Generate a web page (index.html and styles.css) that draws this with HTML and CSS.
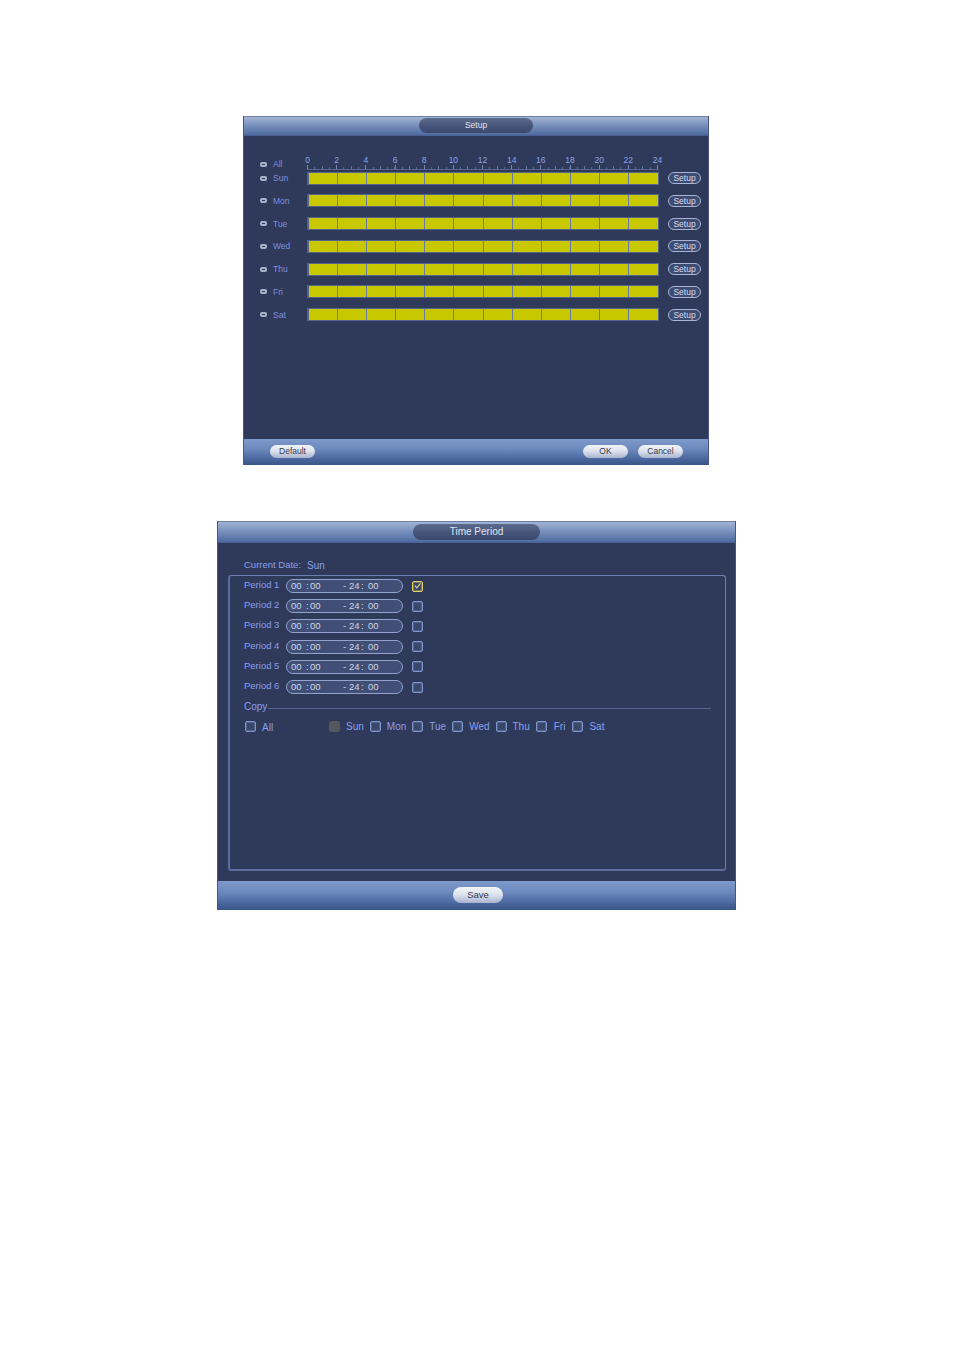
FILE: index.html
```html
<!DOCTYPE html>
<html lang="en">
<head>
    <meta charset="UTF-8">
    <title>Setup and Time Period</title>
    <link rel="stylesheet" href="styles.css">
</head>
<body>
    <div class="dialog setup-dialog">
        <div class="titlebar"><div class="title-pill">Setup</div></div>
        <div class="setup-body">
            <div class="ruler-row">
                <span class="radio"></span><span class="day-name">All</span>
                <div class="ruler">
                    <div class="hours">
                        <span>0</span><span>2</span><span>4</span><span>6</span><span>8</span><span>10</span><span>12</span><span>14</span><span>16</span><span>18</span><span>20</span><span>22</span><span>24</span>
                    </div>
                    <div class="ticks"></div>
                </div>
            </div>
            <div class="day-row"><span class="radio"></span><span class="day-name">Sun</span><div class="bar"></div><button class="mini-btn">Setup</button></div>
            <div class="day-row"><span class="radio"></span><span class="day-name">Mon</span><div class="bar"></div><button class="mini-btn">Setup</button></div>
            <div class="day-row"><span class="radio"></span><span class="day-name">Tue</span><div class="bar"></div><button class="mini-btn">Setup</button></div>
            <div class="day-row"><span class="radio"></span><span class="day-name">Wed</span><div class="bar"></div><button class="mini-btn">Setup</button></div>
            <div class="day-row"><span class="radio"></span><span class="day-name">Thu</span><div class="bar"></div><button class="mini-btn">Setup</button></div>
            <div class="day-row"><span class="radio"></span><span class="day-name">Fri</span><div class="bar"></div><button class="mini-btn">Setup</button></div>
            <div class="day-row"><span class="radio"></span><span class="day-name">Sat</span><div class="bar"></div><button class="mini-btn">Setup</button></div>
        </div>
        <div class="footer setup-footer">
            <button class="btn">Default</button>
            <div class="footer-right">
                <button class="btn">OK</button>
                <button class="btn">Cancel</button>
            </div>
        </div>
    </div>

    <div class="dialog period-dialog">
        <div class="titlebar"><div class="title-pill">Time Period</div></div>
        <div class="period-body">
            <div class="current-date"><span>Current Date:</span><span class="date-value">Sun</span></div>
            <div class="group-box">
                <div class="period-row">
                    <span class="period-name">Period 1</span>
                    <div class="time-field"><span class="t-a">00</span><span class="t-b">:</span><span class="t-c">00</span><span class="t-d">-</span><span class="t-e">24</span><span class="t-f">:</span><span class="t-g">00</span></div>
                    <span class="check checked">
                        <svg viewBox="0 0 12 12" width="10" height="10"><path d="M2.5 5.5 L5 8.5 L10 2.5" fill="none" stroke="#e8dc8c" stroke-width="1.4"/></svg>
                    </span>
                </div>
                <div class="period-row">
                    <span class="period-name">Period 2</span>
                    <div class="time-field"><span class="t-a">00</span><span class="t-b">:</span><span class="t-c">00</span><span class="t-d">-</span><span class="t-e">24</span><span class="t-f">:</span><span class="t-g">00</span></div>
                    <span class="check"></span>
                </div>
                <div class="period-row">
                    <span class="period-name">Period 3</span>
                    <div class="time-field"><span class="t-a">00</span><span class="t-b">:</span><span class="t-c">00</span><span class="t-d">-</span><span class="t-e">24</span><span class="t-f">:</span><span class="t-g">00</span></div>
                    <span class="check"></span>
                </div>
                <div class="period-row">
                    <span class="period-name">Period 4</span>
                    <div class="time-field"><span class="t-a">00</span><span class="t-b">:</span><span class="t-c">00</span><span class="t-d">-</span><span class="t-e">24</span><span class="t-f">:</span><span class="t-g">00</span></div>
                    <span class="check"></span>
                </div>
                <div class="period-row">
                    <span class="period-name">Period 5</span>
                    <div class="time-field"><span class="t-a">00</span><span class="t-b">:</span><span class="t-c">00</span><span class="t-d">-</span><span class="t-e">24</span><span class="t-f">:</span><span class="t-g">00</span></div>
                    <span class="check"></span>
                </div>
                <div class="period-row">
                    <span class="period-name">Period 6</span>
                    <div class="time-field"><span class="t-a">00</span><span class="t-b">:</span><span class="t-c">00</span><span class="t-d">-</span><span class="t-e">24</span><span class="t-f">:</span><span class="t-g">00</span></div>
                    <span class="check"></span>
                </div>
                <div class="copy-head"><span>Copy</span><div class="copy-line"></div></div>
                <div class="copy-row">
                    <span class="check"></span><span class="copy-all">All</span>
                    <span class="check disabled"></span><span class="copy-day">Sun</span>
                    <span class="check"></span><span class="copy-day">Mon</span>
                    <span class="check"></span><span class="copy-day">Tue</span>
                    <span class="check"></span><span class="copy-day">Wed</span>
                    <span class="check"></span><span class="copy-day">Thu</span>
                    <span class="check"></span><span class="copy-day day-fri">Fri</span>
                    <span class="check"></span><span class="copy-day">Sat</span>
                </div>
            </div>
        </div>
        <div class="footer period-footer">
            <button class="btn save-btn">Save</button>
        </div>
    </div>
</body>
</html>
```
FILE: styles.css
```css
* {
    margin: 0;
    padding: 0;
    box-sizing: border-box;
}

body {
    background: white;
    font-family: 'Liberation Sans', Arial, sans-serif;
    height: 1350px;
    overflow: hidden;
    padding-top: 116px;
}

.dialog {
    background: #2f3a5b;
    display: flex;
    flex-direction: column;
    border-left: 1px solid #46557f;
    border-right: 1px solid #46557f;
}

.setup-dialog {
    width: 466px;
    height: 349px;
    margin-left: 243px;
}

.period-dialog {
    width: 519px;
    height: 389px;
    margin-left: 217px;
    margin-top: 56px;
}

.titlebar {
    height: 20px;
    background: linear-gradient(180deg, #a3b4d2 0%, #7f95c0 40%, #4d6a9f 100%);
    border-top: 1px solid #6d7ea8;
    border-bottom: 1px solid #4a6096;
    display: flex;
    justify-content: center;
    flex-shrink: 0;
}

.title-pill {
    width: 114px;
    height: 15px;
    margin-top: 1px;
    border-radius: 8px;
    background: linear-gradient(180deg, #5c6c8e 0%, #47567b 50%, #3a486c 100%);
    color: #e0e4f0;
    font-size: 8.5px;
    line-height: 15px;
    text-align: center;
}

.footer {
    margin-top: auto;
    background: linear-gradient(180deg, #7e9acb 0%, #6b88bd 40%, #47659b 80%, #3a5485 100%);
    display: flex;
    align-items: center;
    flex-shrink: 0;
}

.btn {
    background: linear-gradient(180deg, #f2f4f8 0%, #dfe3ee 45%, #a9b4cf 100%);
    border: none;
    border-radius: 7px;
    color: #333a4c;
    font-family: inherit;
    font-size: 8.5px;
    width: 45px;
    height: 13px;
    line-height: 13px;
}

/* setup dialog */

.setup-body {
    flex: 1;
    padding: 20px 0 0 16px;
}

.ruler-row {
    display: flex;
    align-items: flex-start;
    height: 15px;
}

.ruler-row .radio {
    margin-top: 6px;
}

.ruler-row .day-name {
    margin-top: 3px;
}

.radio {
    width: 7px;
    height: 5px;
    border: 2px solid #aab2ca;
    border-radius: 2px;
    flex-shrink: 0;
}

.day-name {
    width: 34px;
    margin-left: 6px;
    color: #7a90e0;
    font-size: 8.5px;
    line-height: 10px;
}

.ruler {
    width: 351.5px;
}

.hours {
    display: grid;
    grid-template-columns: repeat(13, 29.17px);
    margin-left: -14px;
    height: 8px;
    color: #8ea2ea;
    font-size: 8.5px;
    line-height: 8px;
    text-align: center;
}

/* tall tick every 2h, medium every 1h, short every 30min */
.ticks {
    height: 5px;
    margin-top: 1px;
    border-bottom: 1px solid #56668f;
    background-image:
        repeating-linear-gradient(90deg, #7686b2 0, #7686b2 1px, transparent 1px, transparent 29.17px),
        repeating-linear-gradient(90deg, #64749f 0, #64749f 1px, transparent 1px, transparent 14.585px),
        repeating-linear-gradient(90deg, #56668f 0, #56668f 1px, transparent 1px, transparent 7.29px);
    background-size: 100% 4px, 100% 3px, 100% 2px;
    background-position: 0 0, 0 100%, 0 100%;
    background-repeat: no-repeat;
}

.day-row {
    display: flex;
    align-items: center;
    height: 22.75px;
}

.day-row:nth-child(2) {
    height: 14px;
    margin-bottom: 4.6px;
}

.bar {
    width: 351.5px;
    height: 13px;
    border: 1px solid #55648c;
    border-left-width: 2px;
    background-color: #c8c800;
    background-image: repeating-linear-gradient(90deg, transparent 0, transparent 28.17px, #6a7a9c 28.17px, #6a7a9c 29.17px);
    background-origin: border-box;
    background-position: 1.5px 0;
}

.mini-btn {
    width: 33px;
    height: 12px;
    margin-left: 9.5px;
    background: #3f4c72;
    border: 1px solid #a7b4d6;
    border-radius: 6px;
    color: #d4daf0;
    font-family: inherit;
    font-size: 8.5px;
    line-height: 10px;
}

.setup-footer {
    height: 26px;
    padding: 0 25px 1px 26px;
    justify-content: space-between;
}

.footer-right {
    display: flex;
    gap: 10px;
}

/* time period dialog */

.period-dialog .titlebar {
    height: 22px;
}

.period-dialog .title-pill {
    width: 127px;
    height: 16px;
    margin-top: 2px;
    font-size: 10px;
    line-height: 16px;
}

.period-body {
    flex: 1;
    padding: 15px 10px 0 10px;
}

.current-date {
    display: flex;
    height: 16px;
    padding-left: 16px;
    color: #8a9eea;
    font-size: 9.5px;
    line-height: 13px;
}

.date-value {
    margin-left: 6px;
    margin-top: 1px;
    font-size: 10px;
}

.group-box {
    width: 498px;
    height: 296px;
    margin-top: 1px;
    padding: 0 14px 0 14px;
    border: 1px solid #6d7eb0;
    border-left: 2px solid #5c6c9e;
    border-bottom: 2px solid #5c6c9e;
    border-radius: 3px;
}

.period-row {
    display: flex;
    align-items: center;
    height: 20.2px;
}

.period-name {
    width: 42px;
    color: #8a9eea;
    font-size: 9.5px;
    margin-top: -3px;
}

.time-field {
    position: relative;
    width: 117px;
    height: 14px;
    background: #414f77;
    border: 1.2px solid #94a3cc;
    border-radius: 7px;
    color: #d0d6e8;
    font-size: 9.5px;
    line-height: 12px;
}

/* digits sit at fixed slots inside the field */
.time-field span {
    position: absolute;
    top: 0;
}

.t-a { left: 4px; }
.t-b { left: 19px; }
.t-c { left: 23px; }
.t-d { left: 56px; }
.t-e { left: 62px; }
.t-f { left: 74px; }
.t-g { left: 81px; }

.check {
    display: inline-flex;
    align-items: center;
    justify-content: center;
    width: 11px;
    height: 11px;
    border: 1px solid #7e94ce;
    border-radius: 2px;
    background: #3a4768;
    box-shadow: inset 0 0 0 1px rgba(126, 148, 206, 0.35);
    flex-shrink: 0;
}

.period-row .check {
    margin-left: 9px;
}

.check.checked {
    border-color: #e8d060;
    box-shadow: inset 0 0 0 1px rgba(232, 208, 96, 0.35);
}

.check.disabled {
    background: #55575f;
    border-color: #55575f;
    box-shadow: none;
}

.copy-head {
    display: flex;
    align-items: center;
    height: 17px;
    margin-top: 0.6px;
    color: #8a9eea;
    font-size: 10px;
}

.copy-line {
    flex: 1;
    height: 1px;
    margin: 5px 0 0 1px;
    background: #56668f;
}

.copy-row {
    display: flex;
    align-items: center;
    height: 18px;
    margin-top: 3px;
    padding-left: 1px;
    color: #8a9eea;
    font-size: 10px;
}

.copy-all {
    width: 67px;
    margin-left: 6px;
    margin-top: 1px;
}

.copy-day {
    margin: 0 6px;
}

.day-fri {
    margin: 0 7px;
}

.period-footer {
    height: 29px;
    padding-bottom: 1px;
    justify-content: center;
}

.save-btn {
    width: 50px;
    height: 16px;
    font-size: 9.5px;
    line-height: 16px;
    border-radius: 8px;
    margin-left: 3px;
}
```
